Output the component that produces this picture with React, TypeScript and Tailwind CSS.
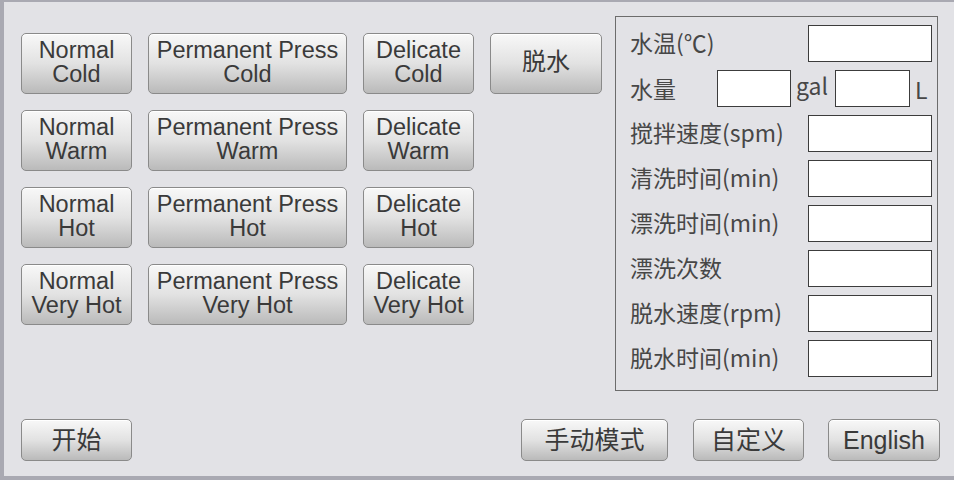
import React from "react"

const btn =
  "flex flex-col items-center justify-center rounded-[5px] border border-[#8a8a8a] bg-linear-to-b from-[#f8f8f8] via-[#e2e2e2] to-[#bababa] shadow-[inset_0_1px_0_#ffffff] text-[#3a3a3a] font-['Liberation_Sans','Noto_Sans_CJK_SC',sans-serif]"

const programs: string[][] = [
  ["Normal", "Cold"], ["Permanent Press", "Cold"], ["Delicate", "Cold"], ["脱水"],
  ["Normal", "Warm"], ["Permanent Press", "Warm"], ["Delicate", "Warm"], [],
  ["Normal", "Hot"], ["Permanent Press", "Hot"], ["Delicate", "Hot"], [],
  ["Normal", "Very Hot"], ["Permanent Press", "Very Hot"], ["Delicate", "Very Hot"], [],
]

const fields = ["搅拌速度(spm)", "清洗时间(min)", "漂洗时间(min)", "漂洗次数", "脱水速度(rpm)", "脱水时间(min)"]

const Box = ({ w }: { w: string }) => (
  <div className={`${w} h-[37px] border border-[#3c3c3c] bg-white`} />
)

const App: React.FC = () => {
  return (
    <div className="w-[954px] h-[480px] overflow-hidden bg-[#e2e2e6] border-l-4 border-t-2 border-b-4 border-[#a9a9b2] flex flex-col">
      <div className="flex pl-[17px] pt-[14px]">
        <div className="mt-[17px] grid grid-cols-[111px_199px_111px_112px] auto-rows-[61px] gap-x-4 gap-y-4 self-start">
          {programs.map((p, i) =>
            p.length === 0 ? (
              <div key={i} />
            ) : p.length === 1 ? (
              <button key={i} className={`${btn} text-[24px] leading-[26px] pb-[4px]`}>{p[0]}</button>
            ) : (
              <button key={i} className={`${btn} text-[23.5px] leading-[24px] pb-[3px]`}>
                <span>{p[0]}</span>
                <span>{p[1]}</span>
              </button>
            )
          )}
        </div>

        <div className="ml-[13px] w-[323px] h-[375px] border border-[#6c6c6c] pt-[8px] pl-[14px] pr-[5px] flex flex-col gap-[8px] text-[#474747] text-[23px] leading-[26px] font-['Noto_Sans_CJK_SC',sans-serif]">
          <div className="flex items-center h-[37px]">
            <span className="flex-1 pb-[4px]">水温(℃)</span>
            <Box w="w-[124px]" />
          </div>
          <div className="flex items-center h-[37px]">
            <span className="w-[87px] pb-[2px]">水量</span>
            <Box w="w-[74px]" />
            <span className="ml-[5px] w-[39px] pb-[8px]">gal</span>
            <Box w="w-[75px]" />
            <span className="ml-[5px]">L</span>
          </div>
          {fields.map((f) => (
            <div key={f} className="flex items-center h-[37px]">
              <span className="flex-1 pb-[3px]">{f}</span>
              <Box w="w-[124px]" />
            </div>
          ))}
        </div>
      </div>

      <div className="mt-[28px] flex pl-[17px] pr-[14px] h-[42px] text-[25px] leading-[28px]">
        <button className={`${btn} w-[111px]`}>开始</button>
        <div className="flex-1" />
        <button className={`${btn} w-[147px]`}>手动模式</button>
        <button className={`${btn} w-[111px] ml-[25px]`}>自定义</button>
        <button className={`${btn} w-[112px] ml-[24px]`}>English</button>
      </div>
    </div>
  )
}

export default App
